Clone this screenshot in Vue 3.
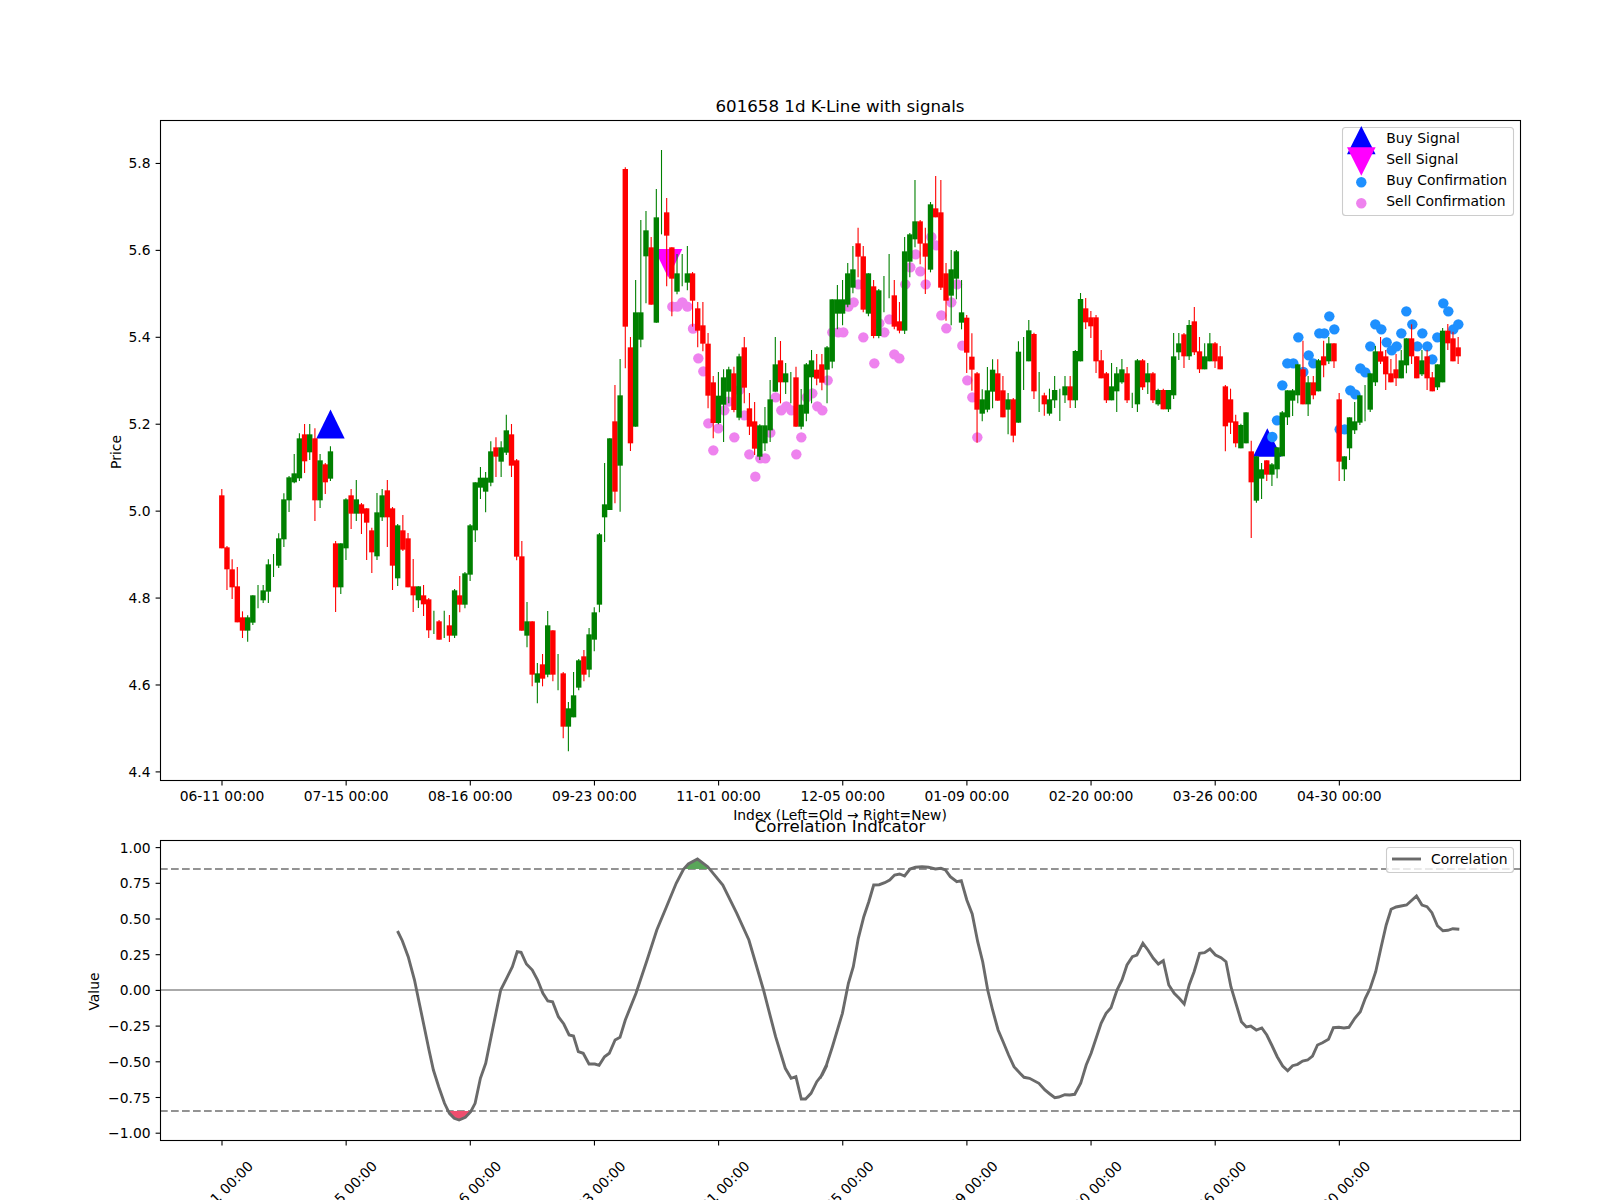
<template>
  <div class="page">
    <svg class="figure" width="1600" height="1200" viewBox="0 0 1600 1200">
      <!-- price panel -->
      <text class="title" x="840" y="112">601658 1d K-Line with signals</text>
      <polygon class="buy" points="330.5,409.4 316.3,438.4 344.7,438.4" />
      <polygon class="buy" points="1267.3,428.3 1253,456.7 1281.6,456.7" />
      <polygon class="sell" points="654.3,249 682.3,249 668.3,277.8" />
      <circle v-for="(p, i) in sellDots" :key="'s' + i" class="dot-sell" :cx="p[0]" :cy="p[1]" r="5.2" />
      <circle v-for="(p, i) in buyDots" :key="'b' + i" class="dot-buy" :cx="p[0]" :cy="p[1]" r="5.2" />

      <g v-for="c in candles" :key="c.i" :class="c.up ? 'up' : 'down'">
        <line class="wick" :x1="c.x" :x2="c.x" :y1="c.wickTop" :y2="c.wickBottom" />
        <rect v-if="c.height > 0" class="body" :x="c.x - 2.7" :y="c.top" width="5.4" :height="c.height" />
      </g>

      <rect class="spine" x="160.5" y="120.5" width="1360" height="660" />
      <g v-for="t in priceTicks" :key="t.label">
        <line class="tick" x1="155.6" x2="160.5" :y1="t.y" :y2="t.y" />
        <text class="tick-y" x="150.6" :y="t.y + 5">{{ t.label }}</text>
      </g>
      <g v-for="t in timeTicks" :key="t.label">
        <line class="tick" :x1="t.x" :x2="t.x" y1="780.5" y2="785.4" />
        <text class="tick-x" :x="t.x" y="801">{{ t.label }}</text>
      </g>
      <text class="label" transform="translate(120.5 452) rotate(-90)">Price</text>
      <text class="label" x="840" y="820">Index (Left=Old → Right=New)</text>

      <!-- legend -->
      <rect class="legend-box" x="1342.5" y="127.5" width="171" height="88" rx="3" />
      <polygon class="buy" points="1361.3,126 1347,154.3 1375.6,154.3" />
      <polygon class="sell" points="1347,147.3 1375.6,147.3 1361.3,175.7" />
      <circle class="dot-buy" cx="1361.3" cy="182.3" r="5.2" />
      <circle class="dot-sell" cx="1361.3" cy="203.3" r="5.2" />
      <text class="legend-text" x="1386.3" y="143">Buy Signal</text>
      <text class="legend-text" x="1386.3" y="164">Sell Signal</text>
      <text class="legend-text" x="1386.3" y="185">Buy Confirmation</text>
      <text class="legend-text" x="1386.3" y="206.4">Sell Confirmation</text>

      <!-- correlation panel -->
      <text class="title" x="840" y="832">Correlation Indicator</text>
      <line class="zero" x1="160" x2="1520" y1="990" y2="990" />
      <line class="limit" x1="160" x2="1520" y1="869" y2="869" />
      <line class="limit" x1="160" x2="1520" y1="1111" y2="1111" />
      <polygon class="fill-high" :points="fillHigh" />
      <polygon class="fill-low" :points="fillLow" />
      <polyline class="corr" :points="corrPoints" />

      <rect class="spine" x="160.5" y="840.5" width="1360" height="300" />
      <g v-for="t in corrTicks" :key="t.label">
        <line class="tick" x1="155.6" x2="160.5" :y1="t.y" :y2="t.y" />
        <text class="tick-y" x="150.6" :y="t.y + 5">{{ t.label }}</text>
      </g>
      <g v-for="t in timeTicks" :key="'c' + t.label">
        <line class="tick" :x1="t.x" :x2="t.x" y1="1140.5" y2="1145.4" />
        <text class="tick-x" :transform="`translate(${t.x + 2} 1197) rotate(-45)`">{{ t.label }}</text>
      </g>
      <text class="label" transform="translate(98.5 991.5) rotate(-90)">Value</text>

      <rect class="legend-box" x="1386.5" y="847.5" width="127" height="25" rx="3" />
      <line class="corr" x1="1392" x2="1421" y1="859" y2="859" />
      <text class="legend-text" x="1431" y="864">Correlation</text>
    </svg>
  </div>
</template>

<script setup>
const X0 = 221.8
const STEP = 5.173

// candles by stretch: y0 is where the stretch starts, values are thirds of a pixel from there
// [colour, body top, body bottom, wick top, wick bottom]
const stretches = [
  { y0: 420, rows: [
    ['r',226,385,207,385],['r',382,448,378,510],['r',448,502,418,537],['r',499,607,441,607],
    ['r',592,632,574,654],['g',592,632,586,665],['g',526,608,526,615],['g',0,0,495,565],
    ['g',511,541,495,549],['g',433,515,418,549],['g',0,0,402,471],['g',355,437,340,444],
    ['g',238,358,220,381],['g',172,241,168,276],['g',160,187,102,190],['g',55,175,40,183],
    ['r',43,124,12,159],['g',43,97,12,120],['r',55,241,25,303],['g',121,241,102,264],
    ['r',133,187,129,222],['g',94,176,79,183],['r',370,502,363,576],['g',370,502,370,522],
    ['g',238,385,235,420],['r',226,281,207,327],['g',238,281,180,303],['r',253,281,249,342],
    ['r',265,308,265,420],['r',331,397,323,459],['g',277,409,219,420],['g',226,292,207,303],
    ['r',211,292,180,381],['r',265,437,261,510],['g',316,475,312,498],['r',331,389,285,393],
    ['r',355,502,339,502],['r',499,526,417,576],['g',499,541,499,564],['r',526,553,495,588],
    ['r',538,631,534,654]
  ] },
  { y0: 410, rows: [
    ['g',0,0,602,672],['r',634,689,630,689],['g',0,0,602,684],['r',646,677,615,696],
    ['g',541,677,537,684],['r',556,584,498,607],['g',490,584,486,595],['g',346,494,342,513],
    ['g',217,361,217,396],['g',203,233,171,267],['g',203,245,186,307],['g',124,218,94,229],
    ['r',112,140,82,201],['g',112,155,94,201],['g',61,128,14,135],['r',73,167,42,201],
    ['r',151,440,147,451],['r',439,662,393,662],['g',634,677,576,712],['r',634,794,634,829],
    ['g',790,818,759,880],['r',763,806,732,829],['g',646,794,603,802],['r',661,794,661,814],
    ['g',0,0,732,841],['r',790,950,786,985],['g',895,950,876,1024],['g',856,922,786,922],
    ['g',751,833,747,841],['r',739,794,720,814],['g',673,779,654,802],['g',607,689,592,724],
    ['g',373,584,369,607],['g',283,322,159,396]
  ] },
  { y0: 145, rows: [
    ['g',880,1095,880,1095],['r',829,1040,720,1075],['g',751,962,642,1100],['r',72,545,67,670],
    ['r',607,895,576,918],['g',502,845,405,845],['g',502,584,225,607],['g',256,334,198,475],
    ['r',307,479,276,479],['g',217,533,132,533],['g',0,0,15,268],['r',202,272,159,424],
    ['r',307,401,307,514],['g',385,440,327,448],['g',0,0,327,424],['g',385,413,303,436],
    ['r',385,467,381,545],['r',490,557,471,607],['r',541,596,471,619],['r',596,752,564,790],
    ['r',712,834,693,880],['g',752,834,681,838],['g',697,779,673,891],['g',673,740,665,775],
    ['r',685,795,665,802],['g',634,818,626,826],['r',607,728,576,775],['r',790,845,744,870],
    ['r',829,911,771,930],['g',841,935,838,945],['g',841,895,786,918],['g',763,856,705,891],
    ['g',658,740,576,740],['r',646,712,588,775],['g',685,712,654,747],['g',0,0,681,775],
    ['r',697,845,665,845],['g',779,845,732,853],['g',658,806,654,829],['g',646,697,615,775]
  ] },
  { y0: 170, rows: [
    ['r',599,626,552,646],['r',583,638,552,661],['g',532,599,528,700],['g',388,575,388,595],
    ['g',388,431,345,478],['g',388,431,330,466],['g',310,404,279,412],['g',298,353,228,370],
    ['r',220,260,173,322],['r',259,419,228,427],['g',310,431,310,439],['r',349,498,330,505],
    ['g',361,498,357,505],['g',0,0,318,427],['g',0,0,252,385],['r',376,470,330,478],
    ['r',454,482,396,490],['g',244,482,201,492],['g',193,275,189,322],['g',154,208,30,232],
    ['r',154,221,150,283],['r',220,260,173,372],['g',103,299,96,307],['r',115,142,18,142],
    ['r',127,353,30,360],['r',310,392,279,452],['g',298,377,240,466],['g',244,326,240,388],
    ['g',427,458,330,478],['r',443,548,435,609],['r',560,599,490,662],['r',610,719,606,818],
    ['g',688,731,658,754],['g',661,719,591,727],['g',599,665,568,715],['r',610,692,568,692],
    ['r',661,742,618,742],['g',688,719,669,793],['r',688,797,684,817],['g',545,758,514,758]
  ] },
  { y0: 290, rows: [
    ['g',0,0,141,300],['g',121,214,90,214],['r',132,304,128,327],['g',0,0,246,366],
    ['r',316,343,308,377],['g',328,371,296,377],['g',300,331,258,354],['g',0,0,296,393],
    ['g',289,316,258,339],['r',289,331,258,354],['g',183,331,180,354],['g',27,214,9,214],
    ['r',55,97,24,117],['r',82,109,63,144],['r',82,214,75,249],['r',211,265,180,265],
    ['r',250,331,246,339],['g',289,331,219,331],['g',250,304,231,366],['g',238,277,207,281],
    ['r',250,331,231,339],['g',0,0,308,354],['g',211,343,207,366],['r',211,292,207,300],
    ['g',250,277,219,312],['r',250,331,246,339],['g',300,343,296,347],['r',300,358,296,358],
    ['g',300,358,300,366],['g',199,316,129,327],['g',160,187,129,210],['r',133,199,129,234],
    ['g',105,199,90,210],['r',94,187,51,195],['r',184,238,141,249],['g',199,238,160,238],
    ['g',160,214,129,214],['r',160,214,156,234],['r',199,238,168,238]
  ] },
  { y0: 290, rows: [
    ['r',289,409,285,484],['r',328,398,296,432],['r',394,460,374,472],['g',405,475,401,475],
    ['g',367,460,367,460],['r',484,577,452,744],['g',499,632,499,638],['g',538,566,519,627],
    ['r',511,554,511,573],['g',523,554,519,588],['g',472,538,472,565],['g',367,499,363,499],
    ['g',301,382,301,405],['g',301,332,297,378],['g',223,316,223,340],['r',238,343,152,343],
    ['g',277,343,258,378],['r',277,316,258,328],['g',211,304,207,304],['r',199,226,152,262],
    ['g',160,214,141,222],['r',160,214,160,234],['r',328,515,309,573],['g',499,538,499,573],
    ['g',382,475,382,510],['g',394,421,336,432],['g',316,398,316,405],['g',0,0,285,394],
    ['g',250,359,250,366],['g',184,277,168,288],['r',184,215,141,222],['r',199,253,180,300],
    ['r',250,277,207,277],['r',238,265,192,288],['g',211,265,180,265],['g',145,226,145,250],
    ['r',145,199,103,222],['r',199,265,199,265],['g',211,253,180,258],['r',199,265,180,300],
    ['r',262,304,246,304],['g',223,292,223,300],['g',122,277,114,277],['r',122,160,102,180],
    ['r',145,214,125,214],['r',172,199,141,222]
  ] }
]

const candles = []
for (const s of stretches) {
  for (const [colour, top, bottom, wickTop, wickBottom] of s.rows) {
    const i = candles.length
    candles.push({
      i,
      x: X0 + STEP * i,
      up: colour === 'g',
      top: s.y0 + top / 3,
      height: (bottom - top) / 3,
      wickTop: s.y0 + wickTop / 3,
      wickBottom: s.y0 + wickBottom / 3
    })
  }
}

const sellDots = [
  [217,530],[232,530],[247,517],[262,530],[279,596],[295,685],[310,724],[325,880],[340,961],[355,895],
  [373,841],[385,815],[403,922],[418,780],[433,856],[448,973],[466,1040],[481,985],[496,985],[511,908],
  [527,802],[544,841],[559,829],[574,841],[589,973],[604,922],[620,802],[637,790],[652,829],[667,841],
  [683,751],[697,607],[715,607],[730,607],[745,530],[761,517],[775,463],[790,622],[823,700],[838,580],
  [853,607],[868,568],[883,673],[898,685],[916,463],[931,412],[947,373],[961,424],[977,463],[994,321],
  [1009,346],[1024,556],[1039,595],[1054,517],[1071,463],[1087,647],[1102,751],[1117,802],[1132,922]
].map(([x, y]) => [600 + x / 3, 130 + y / 3])

const buyDots = [
  [142,441],[156,391],[172,286],[187,220],[205,220],[220,142],[235,246],[251,196],[265,220],[283,130],
  [298,130],[313,79],[328,118],[344,418],[359,418],[376,301],[391,313],[406,235],[421,247],[436,169],
  [451,103],[469,118],[485,157],[500,181],[515,169],[529,130],[544,64],[562,103],[577,169],[592,130],
  [607,169],[622,208],[637,142],[655,40],[670,64],[685,118],[700,103]
].map(([x, y]) => [1225 + x / 3, 290 + y / 3])

const priceTicks = ['4.4', '4.6', '4.8', '5.0', '5.2', '5.4', '5.6', '5.8'].map((label, i) => ({
  label,
  y: 771.9 - i * 86.92
}))

const corrTicks = ['−1.00', '−0.75', '−0.50', '−0.25', '0.00', '0.25', '0.50', '0.75', '1.00'].map((label, i) => ({
  label,
  y: 1133.2 - i * 35.7
}))

const timeLabels = ['06-11', '07-15', '08-16', '09-23', '11-01', '12-05', '01-09', '02-20', '03-26', '04-30']
const timeTicks = timeLabels.map((d, i) => ({ label: `${d} 00:00`, x: 222 + i * 124.15 }))

const left = [
  [655,483],[665,512],[677,560],[690,630],[700,700],[710,770],[720,840],[729,900],[740,950],[752,1000],
  [762,1030],[772,1045],[782,1050],[795,1042],[806,1025],[815,1000],[826,925],[837,880],[848,800],[858,730],
  [868,660],[880,625],[892,590],[902,545],[910,547],[921,582],[933,600],[944,630],[955,670],[965,693],
  [975,695],[987,740],[998,762],[1009,795],[1018,798],[1028,845],[1038,850],[1050,882],[1062,882],[1071,886],
  [1082,860],[1092,850],[1104,810],[1114,802],[1125,750],[1147,670],[1170,570],[1190,480],[1210,410],[1230,340],
  [1245,298],[1255,282],[1274,267],[1295,290],[1326,345],[1355,430],[1380,510],[1395,585],[1410,660],[1435,800],
  [1455,895],[1467,925],[1477,920],[1488,987],[1497,987],[1508,970],[1520,935],[1531,915],[1541,885]
].map(([x, y]) => [80 + x / 2.063, 770 + y / 3])

const right = [
  [0,925],[13,885],[25,830],[45,730],[57,640],[67,590],[77,505],[88,440],[98,395],[108,345],
  [119,344],[130,338],[140,330],[150,315],[160,312],[170,318],[181,297],[192,292],[205,290],[218,292],
  [232,297],[243,295],[252,300],[262,320],[275,335],[284,332],[295,390],[306,432],[317,515],[327,575],
  [337,660],[347,720],[358,780],[368,815],[379,855],[390,890],[402,910],[410,922],[421,925],[440,940],
  [452,960],[462,972],[472,983],[480,981],[492,974],[502,975],[512,973],[524,940],[535,885],[545,850],
  [565,760],[575,730],[585,713],[597,660],[607,630],[617,585],[628,560],[637,555],[649,520],[659,540],
  [670,565],[680,582],[690,572],[701,645],[712,670],[722,685],[732,702],[742,645],[752,605],[763,550],
  [773,548],[784,537],[795,555],[806,563],[816,575],[826,650],[836,700],[847,755],[857,771],[866,768],
  [877,780],[888,774],[898,795],[908,825],[919,860],[930,888],[940,902],[950,887],[960,883],[970,873],
  [980,870],[990,858],[1000,825],[1010,818],[1022,808],[1032,773],[1043,772],[1053,774],[1063,772],[1075,745],
  [1086,725],[1096,685],[1106,655],[1117,605],[1128,530],[1138,465],[1148,418],[1158,411],[1168,408],[1179,405],
  [1199,378],[1210,405],[1220,410],[1230,428],[1241,467],[1252,482],[1262,481],[1272,476],[1285,478]
].map(([x, y]) => [820 + x / 2.01, 770 + y / 3])

const toPoints = (pts) => pts.map(([x, y]) => `${x.toFixed(1)},${y.toFixed(1)}`).join(' ')
const corrPoints = toPoints([...left, ...right])

const fillHigh = toPoints([
  [1247,297],[1255,282],[1274,267],[1295,290],[1300,297]
].map(([x, y]) => [80 + x / 2.063, 770 + y / 3]))

const fillLow = toPoints([
  [760,1023],[762,1030],[772,1045],[782,1050],[795,1042],[806,1023]
].map(([x, y]) => [80 + x / 2.063, 770 + y / 3]))
</script>

<style scoped>
.page {
  width: 1600px;
  height: 1200px;
  overflow: hidden;
  background: #ffffff;
}

.figure {
  display: block;
  font-family: "DejaVu Sans", sans-serif;
}

.title {
  font-size: 16.67px;
  text-anchor: middle;
  fill: #000;
}

.label {
  font-size: 13.89px;
  text-anchor: middle;
  fill: #000;
}

.tick {
  stroke: #000;
  stroke-width: 1.1;
}

.tick-x {
  font-size: 13.89px;
  text-anchor: middle;
  fill: #000;
}

.tick-y {
  font-size: 13.89px;
  text-anchor: end;
  fill: #000;
}

.spine {
  fill: none;
  stroke: #000;
  stroke-width: 1.1;
}

.buy {
  fill: #0000ff;
}

.sell {
  fill: #ff00ff;
}

.dot-buy {
  fill: #1e90ff;
}

.dot-sell {
  fill: #ee82ee;
}

.wick {
  stroke-width: 1.1;
}

.up .wick {
  stroke: #008000;
}

.up .body {
  fill: #008000;
}

.down .wick {
  stroke: #ff0000;
}

.down .body {
  fill: #ff0000;
}

.legend-box {
  fill: rgba(255, 255, 255, 0.8);
  stroke: #cccccc;
  stroke-width: 1.1;
}

.legend-text {
  font-size: 13.89px;
  fill: #000;
}

.zero {
  stroke: #aaaaaa;
  stroke-width: 2.1;
}

.limit {
  stroke: #939393;
  stroke-width: 2.1;
  stroke-dasharray: 7.7 3.3;
}

.corr {
  fill: none;
  stroke: #6a6a6a;
  stroke-width: 2.9;
}

.fill-high {
  fill: #5aa65a;
}

.fill-low {
  fill: #ef4f6f;
}
</style>
